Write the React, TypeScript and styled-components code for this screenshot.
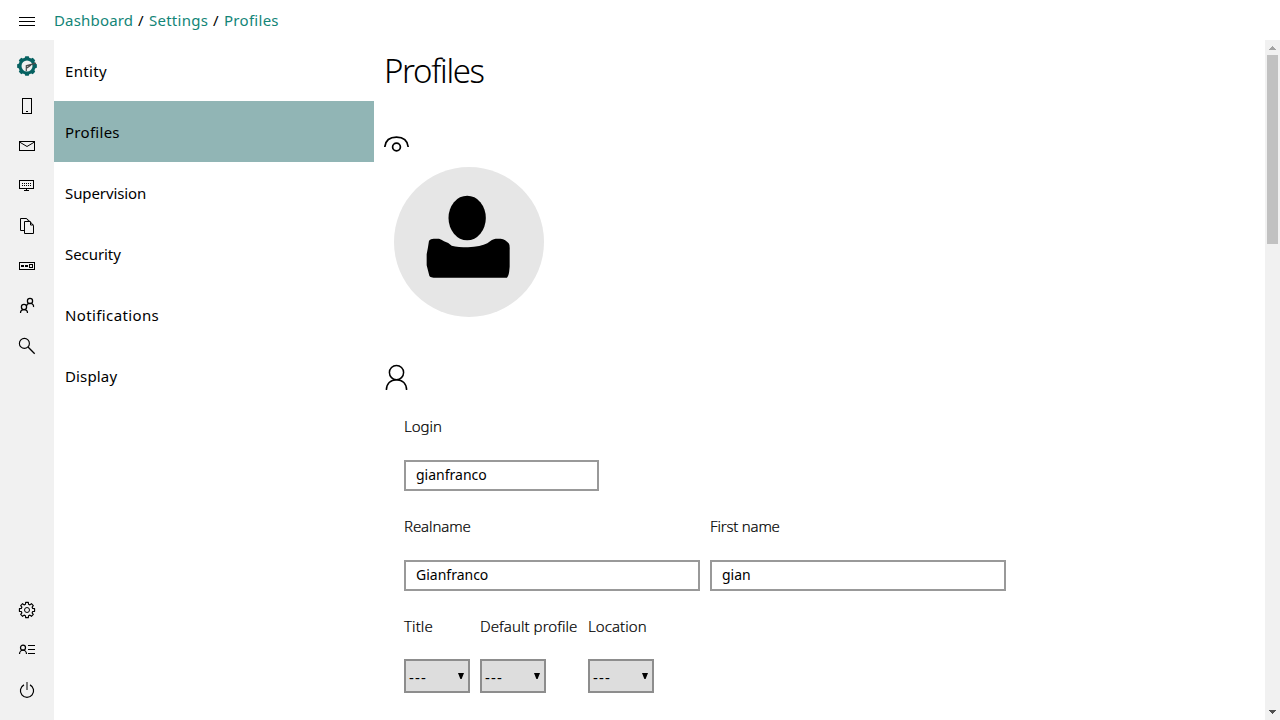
import React from 'react';
import styled, { createGlobalStyle } from 'styled-components';

const GlobalStyle = createGlobalStyle`
  * { box-sizing: border-box; }
  body {
    margin: 0;
    background: #fff;
    color: #000;
    font-family: "Noto Sans", "Open Sans", sans-serif;
    font-size: 15px;
    overflow: hidden;
  }
`;

const Page = styled.div`
  display: flex;
  flex-direction: column;
  width: 1280px;
  height: 720px;
  overflow: hidden;
`;

const Header = styled.header`
  display: flex;
  flex: 0 0 40px;
  align-items: center;
`;

const MenuButton = styled.div`
  display: flex;
  width: 54px;
  justify-content: center;
  padding-top: 4px;
`;

const Breadcrumb = styled.nav`
  display: flex;
  white-space: pre;
  line-height: 40px;
`;

const Crumb = styled.a<{ $width: number; $spacing?: number }>`
  width: ${p => p.$width}px;
  letter-spacing: ${p => p.$spacing ?? 0}px;
  color: #128577;
`;

const Slash = styled.span`
  width: 16px;
  padding-left: 5px;
`;

const Body = styled.div`
  display: flex;
  flex: 1;
  min-height: 0;
`;

const Rail = styled.aside`
  display: flex;
  flex: 0 0 54px;
  flex-direction: column;
  justify-content: space-between;
  padding: 6px 0 10px;
  background: #f1f1f1;
`;

const RailItem = styled.div`
  display: flex;
  height: 40px;
  align-items: center;
  justify-content: center;
`;

const SideMenu = styled.nav`
  flex: 0 0 320px;
`;

const SideItem = styled.div<{ $active?: boolean; $spacing: number }>`
  height: 61px;
  padding-left: 11px;
  line-height: 62px;
  letter-spacing: ${p => p.$spacing}px;
  background: ${p => (p.$active ? '#91b5b5' : 'transparent')};
`;

const Content = styled.main`
  flex: 1;
  padding-left: 10px;
  overflow: hidden;
`;

const Title = styled.h1`
  height: 93px;
  margin: 0;
  font-size: 33px;
  font-weight: 300;
  line-height: 62px;
  letter-spacing: -1.35px;
`;

const SectionIcon = styled.div<{ $height: number }>`
  height: ${p => p.$height}px;
`;

const Avatar = styled.div`
  width: 150px;
  height: 150px;
  margin: 0 0 43px 10px;
  border-radius: 50%;
  background: #e6e6e6;
`;

const Form = styled.form`
  padding: 15px 0 0 20px;
`;

const Row = styled.div`
  display: flex;
  gap: 10px;
  height: 100px;
`;

const Field = styled.div<{ $width: number }>`
  width: ${p => p.$width}px;
`;

const Label = styled.label<{ $spacing: number; $height?: number }>`
  display: block;
  height: ${p => p.$height ?? 55}px;
  line-height: 43px;
  font-weight: 300;
  -webkit-text-stroke: 0.2px #000;
  white-space: nowrap;
  letter-spacing: ${p => p.$spacing}px;
`;

const Input = styled.input<{ $spacing?: number }>`
  display: block;
  width: 100%;
  height: 31px;
  padding: 0 10px 2px;
  border: 2px solid #999;
  background: #fff;
  font: 14px "Noto Sans", "Open Sans", sans-serif;
  letter-spacing: ${p => p.$spacing ?? 0}px;
  color: #000;
  outline: 0;
`;

const Select = styled.div`
  display: flex;
  justify-content: space-between;
  width: 66px;
  height: 34px;
  padding: 0 4px 0 3px;
  border: 2px solid #8d8d8d;
  background: #ddd;
  line-height: 32px;
  letter-spacing: 1.2px;
`;

const ScrollTrack = styled.div`
  display: flex;
  flex: 0 0 15px;
  flex-direction: column;
  align-items: center;
  background: #f1f1f1;
`;

const ScrollThumb = styled.div`
  width: 11px;
  height: 189px;
  margin-bottom: auto;
  background: #c1c1c1;
`;

const Icon = ({ children }: { children: React.ReactNode }) => (
  <svg width="20" height="20" viewBox="0 0 20 20" fill="none" stroke="#000" strokeWidth="1">
    {children}
  </svg>
);

const polar = (r: number, deg: number, cx: number, cy: number) => {
  const a = (deg * Math.PI) / 180;
  return `${(cx + r * Math.cos(a)).toFixed(2)} ${(cy + r * Math.sin(a)).toFixed(2)}`;
};

const gearPath = (outer: number, inner: number, cx = 10, cy = 10) => {
  const points: string[] = [];
  for (let i = 0; i < 8; i++) {
    const a = i * 45;
    points.push(polar(inner, a - 15, cx, cy), polar(outer, a - 10, cx, cy));
    points.push(polar(outer, a + 10, cx, cy), polar(inner, a + 15, cx, cy));
  }
  return `M${points.join('L')}Z`;
};

const topIcons = [
  <Icon key="logo">
    <path d={gearPath(10, 8.6)} fill="#066161" stroke="none" />
    <circle cx="10" cy="10" r="5.5" fill="#f1f1f1" stroke="none" />
    <path d="M9.3 15V9.8L19 7.2M10 12L14 9" stroke="#4a4a4a" strokeWidth="1.2" />
  </Icon>,
  <Icon key="phone">
    <rect x="5.5" y="2.5" width="9" height="15" />
    <path d="M9 15.5h2" />
  </Icon>,
  <Icon key="mail">
    <rect x="2.5" y="5.5" width="15" height="9" />
    <path d="M2.5 6l7.5 4.5L17.5 6" />
  </Icon>,
  <Icon key="screen">
    <rect x="2.5" y="4.5" width="14" height="8" />
    <path d="M5 7.5h10M5 9.5h10" strokeDasharray="1 1" />
    <path d="M9.5 13v1M7 14.5h5" />
  </Icon>,
  <Icon key="files">
    <path d="M7 14.5H3.5v-12H9.5l2.5 3" />
    <path d="M7.5 5.5h5.5l3.5 4v8h-9zM13.5 5.5v3.5h3" />
    <path d="M9.5 2.5l4 3.5" strokeWidth="0.8" />
  </Icon>,
  <Icon key="device">
    <rect x="2.5" y="6.5" width="15" height="7" />
    <path d="M4 10h3M8 10h3" strokeWidth="2" />
    <rect x="12.5" y="8.5" width="3" height="3" />
  </Icon>,
  <Icon key="users">
    <g strokeWidth="1.25">
      <circle cx="7" cy="11" r="2.6" />
      <path d="M3.5 17a3.5 3.3 0 0 1 7 0" />
      <circle cx="13" cy="5" r="2.6" />
      <path d="M9.5 9.8a3.5 3 0 0 1 7 1.2" />
    </g>
  </Icon>,
  <Icon key="search">
    <circle cx="7.4" cy="7.4" r="5" strokeWidth="1.15" />
    <path d="M11 11l6.7 6.7" strokeWidth="1.3" />
  </Icon>,
];

const bottomIcons = [
  <Icon key="settings">
    <path d={gearPath(7.7, 5.9)} strokeWidth="1.15" strokeLinejoin="round" />
    <circle cx="10" cy="10" r="2.5" />
  </Icon>,
  <Icon key="account">
    <circle cx="6" cy="7.7" r="2.5" strokeWidth="1.25" />
    <path d="M2.5 14a3.5 3.8 0 0 1 7 0" strokeWidth="1.25" />
    <path d="M11 5.5h7M11 9.5h7M11 13.5h7" />
  </Icon>,
  <Icon key="power">
    <path d="M7 4.9a6.6 6.6 0 1 0 6 0" strokeWidth="1.2" />
    <path d="M10 2v8" strokeWidth="2" stroke="#777" />
  </Icon>,
];

const menu = [
  { label: 'Entity', spacing: 0.33 },
  { label: 'Profiles', spacing: 0.28 },
  { label: 'Supervision', spacing: -0.1 },
  { label: 'Security', spacing: -0.07 },
  { label: 'Notifications', spacing: 0.38 },
  { label: 'Display', spacing: 0.15 },
];

const choices = [
  { label: 'Title', width: 66, spacing: 0.1 },
  { label: 'Default profile', width: 98, spacing: 0.07 },
  { label: 'Location', width: 66, spacing: 0.08 },
];

const SelectBox = () => (
  <Select>
    <span>---</span>
    <svg width="6" height="30" viewBox="0 0 6 30">
      <path d="M0 12h6L3.6 18H2.4z" />
    </svg>
  </Select>
);

export default function App() {
  return (
    <>
      <GlobalStyle />
      <Page>
        <Header>
          <MenuButton>
            <Icon><path d="M2 5.5h16M2 9.5h16M2 13.5h16" /></Icon>
          </MenuButton>
          <Breadcrumb>
            <Crumb $width={79} $spacing={0.17}>Dashboard</Crumb>
            <Slash>/</Slash>
            <Crumb $width={59} $spacing={0.25}>Settings</Crumb>
            <Slash>/</Slash>
            <Crumb $width={56} $spacing={0.28}>Profiles</Crumb>
          </Breadcrumb>
        </Header>
        <Body>
          <Rail>
            <div>{topIcons.map(icon => <RailItem key={icon.key}>{icon}</RailItem>)}</div>
            <div>{bottomIcons.map(icon => <RailItem key={icon.key}>{icon}</RailItem>)}</div>
          </Rail>
          <SideMenu>
            {menu.map(item => (
              <SideItem key={item.label} $active={item.label === 'Profiles'} $spacing={item.spacing}>
                {item.label}
              </SideItem>
            ))}
          </SideMenu>
          <Content>
            <Title>Profiles</Title>
            <SectionIcon $height={34}>
              <svg width="26" height="22" viewBox="0 0 26 22" fill="none" stroke="#000" strokeWidth="1.7">
                <path d="M0.8 14C1.5 7.5 6 4.2 12.5 4.2S23.5 7.5 24.2 14" />
                <circle cx="12.5" cy="14" r="3.9" />
              </svg>
            </SectionIcon>
            <Avatar>
              <svg width="150" height="150" viewBox="30 21 450 450">
                <ellipse cx="249.5" cy="174" rx="56" ry="67" />
                <path d="M135 242Q140 235 152 236H165Q172 238 180 244Q194 248 203 257Q223 262 252 262Q290 260 310 250Q325 237 335 236H350Q365 238 374 250Q378 255 377 270V320Q376 344 369 353H157Q138 353 136 347Q132 332 128 316V283Q132 263 135 242Z" />
              </svg>
            </Avatar>
            <SectionIcon $height={30}>
              <svg width="26" height="30" viewBox="0 0 26 30" fill="none" stroke="#000" strokeWidth="1.5">
                <circle cx="12.5" cy="12.6" r="7.1" />
                <path d="M2.4 30c0-6 4-10.3 10.1-10.3S22.6 24 22.6 30" />
              </svg>
            </SectionIcon>
            <Form>
              <Row>
                <Field $width={195}>
                  <Label $spacing={0}>Login</Label>
                  <Input readOnly value="gianfranco" />
                </Field>
              </Row>
              <Row>
                <Field $width={296}>
                  <Label $spacing={-0.1}>Realname</Label>
                  <Input readOnly value="Gianfranco" />
                </Field>
                <Field $width={296}>
                  <Label $spacing={-0.2}>First name</Label>
                  <Input readOnly value="gian" />
                </Field>
              </Row>
              <Row>
                {choices.map(choice => (
                  <Field key={choice.label} $width={choice.width}>
                    <Label $spacing={choice.spacing} $height={54}>{choice.label}</Label>
                    <SelectBox />
                  </Field>
                ))}
              </Row>
            </Form>
          </Content>
          <ScrollTrack>
            <svg width="15" height="15" viewBox="0 0 15 15" fill="#a3a3a3" shapeRendering="crispEdges">
              <path d="M7 6h1v1h1v1h1v1h1v1H4V9h1V8h1V7h1z" />
            </svg>
            <ScrollThumb />
            <svg width="15" height="15" viewBox="0 0 15 15" fill="#505050" shapeRendering="crispEdges">
              <path d="M4 5h7v1h-1v1H9v1H8v1H7V8H6V7H5V6H4z" />
            </svg>
          </ScrollTrack>
        </Body>
      </Page>
    </>
  );
}
